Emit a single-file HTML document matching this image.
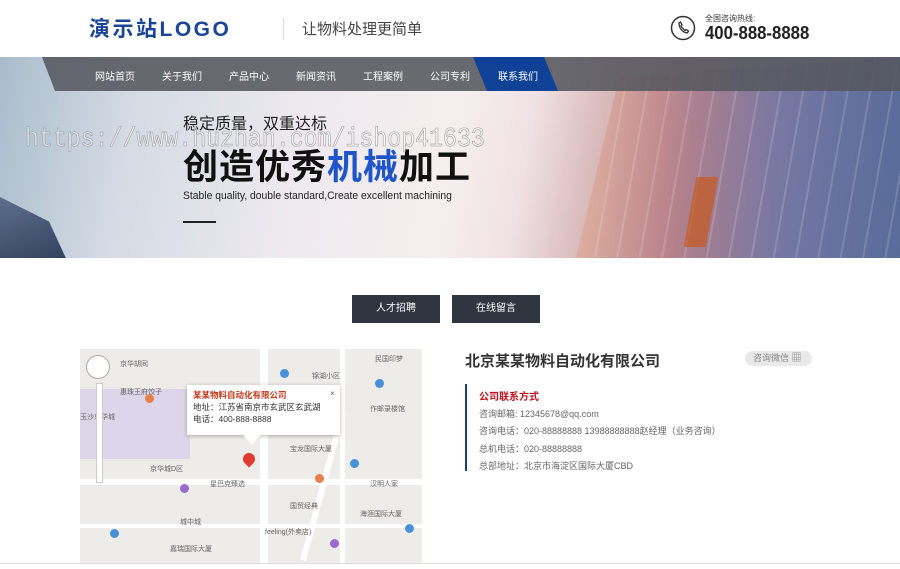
<!DOCTYPE html>
<html><head><meta charset="utf-8"><style>
*{margin:0;padding:0;box-sizing:border-box}
body{width:900px;height:569px;overflow:hidden;background:#fff;font-family:"Liberation Sans","Noto Sans CJK SC",sans-serif;position:relative}
.a{position:absolute}
.m{position:absolute;font-size:7px;color:#666;white-space:nowrap}
.d{position:absolute;width:9px;height:9px;border-radius:50%;background:#4a90d9}
</style></head><body>
<div class="a" style="left:89px;top:13px;font-size:21px;font-weight:bold;color:#1a4597;letter-spacing:2.5px">演示站LOGO</div>
<div class="a" style="left:283px;top:18px;width:1px;height:22px;background:#ddd"></div>
<div class="a" style="left:302px;top:18px;font-size:15px;color:#444">让物料处理更简单</div>
<svg class="a" style="left:670px;top:15px" width="26" height="26" viewBox="0 0 26 26"><circle cx="13" cy="13" r="11.5" fill="none" stroke="#333" stroke-width="1.5"/><path d="M9 8c0 5 3 9 8 10l1.5-2-2.5-1.5-1 1c-2-1-3-3-4-4.5l1-1L10.5 7z" fill="none" stroke="#333" stroke-width="1.3"/></svg>
<div class="a" style="left:705px;top:13px;font-size:8px;color:#333">全国咨询热线:</div>
<div class="a" style="left:705px;top:23px;font-size:18px;font-weight:bold;color:#222;transform:scaleX(.93);transform-origin:left">400-888-8888</div>

<div class="a" style="left:0;top:57px;width:900px;height:201px;overflow:hidden;background:linear-gradient(100deg,#a9bccc 0%,#d4dbe4 15%,#efeaf0 35%,#f6eeee 50%,#f0e2e4 58%,#d8b8b8 66%,#b08a9a 76%,#7f86aa 88%,#6b7da0 100%)">
 <div class="a" style="left:0;top:140px;width:70px;height:70px;background:linear-gradient(160deg,#5d6f8e,#2e3d58);clip-path:polygon(0 0,70% 35%,100% 100%,0 100%)"></div>
 <div class="a" style="left:540px;top:0;width:360px;height:201px;background:repeating-linear-gradient(100deg,rgba(255,255,255,.15) 0 2px,transparent 2px 22px),linear-gradient(90deg,rgba(240,180,140,.5),rgba(190,120,120,.5) 35%,rgba(110,110,160,.6) 65%,rgba(80,100,150,.7));clip-path:polygon(10% 100%,22% 10%,100% 0,100% 100%)"></div>
 <div class="a" style="left:690px;top:120px;width:22px;height:70px;background:#c65a20;opacity:.7;transform:skewX(-10deg)"></div>
 <div class="a" style="left:0;top:0;width:900px;height:34px;background:rgba(85,88,94,.88);clip-path:polygon(42px 0,900px 0,900px 34px,55px 34px)"></div>
 <div class="a" style="left:473px;top:0;width:85px;height:34px;background:#0f4196;clip-path:polygon(0 0,71px 0,85px 34px,14px 34px)"></div>
 <div class="a" style="left:95px;top:11px;font-size:10px;color:#fff">
  <span style="position:absolute;left:0;white-space:nowrap">网站首页</span><span style="position:absolute;left:67px;white-space:nowrap">关于我们</span><span style="position:absolute;left:134px;white-space:nowrap">产品中心</span><span style="position:absolute;left:201px;white-space:nowrap">新闻资讯</span><span style="position:absolute;left:268px;white-space:nowrap">工程案例</span><span style="position:absolute;left:335px;white-space:nowrap">公司专利</span><span style="position:absolute;left:403px;white-space:nowrap">联系我们</span></div>
 <div class="a" style="left:183px;top:53px;font-size:16px;color:#222">稳定质量，双重达标</div>
 <div class="a" style="left:183px;top:82px;font-size:35px;font-weight:bold;color:#111;letter-spacing:1px">创造优秀<span style="color:#1e55c8">机械</span>加工</div>
 <div class="a" style="left:25px;top:68px;font-size:27px;font-family:'Liberation Mono',monospace;color:rgba(255,255,255,.5);-webkit-text-stroke:.6px #999;white-space:nowrap;transform:scaleX(.86);transform-origin:left">https://www.huzhan.com/ishop41633</div>
 <div class="a" style="left:183px;top:133px;font-size:11px;color:#222;transform:scaleX(.94);transform-origin:left">Stable quality, double standard,Create excellent machining</div>
 <div class="a" style="left:183px;top:164px;width:33px;height:2px;background:#222"></div>
</div>

<div class="a" style="left:352px;top:295px;width:88px;height:28px;background:#2f3640;color:#fff;font-size:10px;text-align:center;line-height:28px">人才招聘</div>
<div class="a" style="left:452px;top:295px;width:88px;height:28px;background:#2f3640;color:#fff;font-size:10px;text-align:center;line-height:28px">在线留言</div>

<div class="a" style="left:80px;top:349px;width:342px;height:214px;background:#eeece8;overflow:hidden">
 <div class="a" style="left:0;top:40px;width:110px;height:70px;background:#ddd6ea"></div>
 <div class="a" style="left:180px;top:0;width:8px;height:214px;background:#fff"></div>
 <div class="a" style="left:0;top:130px;width:342px;height:6px;background:#fff"></div>
 <div class="a" style="left:0;top:175px;width:342px;height:4px;background:#fff"></div>
 <div class="a" style="left:260px;top:0;width:5px;height:214px;background:#fff"></div>
 <div class="a" style="left:240px;top:60px;width:6px;height:154px;background:#fff;transform:rotate(15deg)"></div>
 <div class="m" style="left:40px;top:10px">京华胡同</div><div class="m" style="left:40px;top:38px">惠珠王府饺子</div><div class="m" style="left:0;top:63px">玉沙京华城</div>
 <div class="m" style="left:70px;top:115px">京华城D区</div><div class="m" style="left:130px;top:130px">星巴克臻选</div><div class="m" style="left:210px;top:95px">宝龙国际大厦</div>
 <div class="m" style="left:295px;top:5px">民国印梦</div><div class="m" style="left:232px;top:22px">锦湖小区</div><div class="m" style="left:290px;top:55px">作邮录楼馆</div>
 <div class="m" style="left:290px;top:130px">汉明人家</div><div class="m" style="left:280px;top:160px">海涯国际大厦</div><div class="m" style="left:100px;top:168px">城中城</div>
 <div class="m" style="left:210px;top:152px">国贸经典</div><div class="m" style="left:185px;top:178px">feeling(外卖店)</div><div class="m" style="left:90px;top:195px">嘉瑞国际大厦</div>
 <div class="d" style="left:200px;top:20px"></div><div class="d" style="left:295px;top:30px"></div><div class="d" style="left:270px;top:110px"></div><div class="d" style="left:325px;top:175px"></div><div class="d" style="left:30px;top:180px"></div><div class="d" style="left:100px;top:135px;background:#9a6ad1"></div><div class="d" style="left:250px;top:190px;background:#9a6ad1"></div><div class="d" style="left:65px;top:45px;background:#e8804a"></div><div class="d" style="left:235px;top:125px;background:#e8804a"></div>
 <div class="a" style="left:6px;top:6px;width:24px;height:24px;border-radius:50%;border:1px solid #aaa;background:#fff"></div>
 <div class="a" style="left:16px;top:34px;width:7px;height:100px;background:#fff;border:1px solid #ccc"></div>
 <div class="a" style="left:107px;top:36px;width:153px;height:50px;background:#fff;box-shadow:0 1px 4px rgba(0,0,0,.3);font-size:8.5px;color:#333;padding:4px 6px;line-height:12px">
  <div style="color:#c0391b;font-weight:bold">某某物料自动化有限公司</div><div>地址：江苏省南京市玄武区玄武湖</div><div>电话：400-888-8888</div>
  <div class="a" style="right:5px;top:2px;color:#666">×</div></div>
 <div class="a" style="left:163px;top:86px;width:0;height:0;border-left:9px solid transparent;border-right:9px solid transparent;border-top:10px solid #fff"></div>
 <div class="a" style="left:163px;top:104px;width:12px;height:12px;border-radius:50% 50% 50% 0;transform:rotate(-45deg);background:#e03a2f"></div>
</div>
<div class="a" style="left:0;top:563px;width:900px;height:1px;background:#ddd"></div>

<div class="a" style="left:465px;top:350px;font-size:15px;font-weight:bold;color:#333">北京某某物料自动化有限公司</div>
<div class="a" style="left:745px;top:351px;width:67px;height:15px;border-radius:8px;background:#e9e9e9;font-size:9px;color:#888;line-height:15px;padding-left:8px">咨询微信 <span style="font-size:10px">▦</span></div>
<div class="a" style="left:465px;top:384px;width:2px;height:87px;background:#1a3f8a"></div>
<div class="a" style="left:479px;top:388px;font-size:10px;color:#c0121d;font-weight:bold">公司联系方式</div>
<div class="a" style="left:479px;top:406px;font-size:9px;color:#666;line-height:17.3px">
咨询邮箱: 12345678@qq.com<br>咨询电话：020-88888888 13988888888赵经理（业务咨询）<br>总机电话：020-88888888<br>总部地址：北京市海淀区国际大厦CBD</div>
</body></html>
